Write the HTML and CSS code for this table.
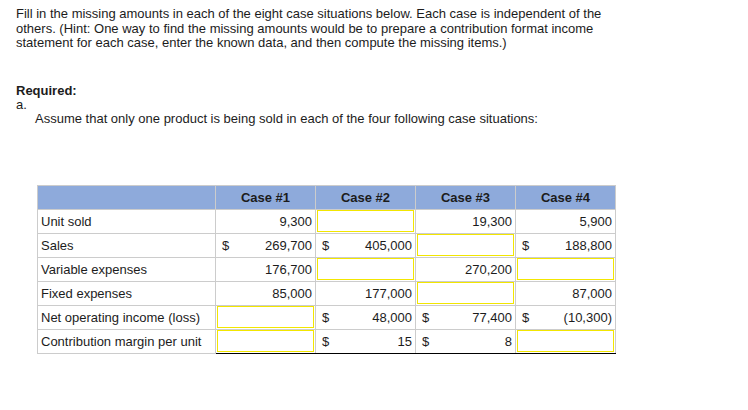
FILE: index.html
```html
<!DOCTYPE html>
<html>
<head>
<meta charset="utf-8">
<link rel="stylesheet" href="styles.css">
</head>
<body>
<div class="page">
  <p class="intro">Fill in the missing amounts in each of the eight case situations below. Each case is independent of the others. (Hint: One way to find the missing amounts would be to prepare a contribution format income statement for each case, enter the known data, and then compute the missing items.)</p>
  <div class="required">Required:</div>
  <div class="part">a.</div>
  <div class="part-text">Assume that only one product is being sold in each of the four following case situations:</div>

  <table class="cases">
    <thead>
      <tr>
        <th class="label-col"></th>
        <th>Case #1</th>
        <th>Case #2</th>
        <th>Case #3</th>
        <th>Case #4</th>
      </tr>
    </thead>
    <tbody>
      <tr class="r1">
        <td class="label">Unit sold</td>
        <td><div class="cell"><span></span><span>9,300</span></div></td>
        <td><div class="input"></div></td>
        <td><div class="cell"><span></span><span>19,300</span></div></td>
        <td><div class="cell"><span></span><span>5,900</span></div></td>
      </tr>
      <tr class="r2">
        <td class="label">Sales</td>
        <td><div class="cell"><span>$</span><span>269,700</span></div></td>
        <td><div class="cell"><span>$</span><span>405,000</span></div></td>
        <td><div class="input"></div></td>
        <td><div class="cell"><span>$</span><span>188,800</span></div></td>
      </tr>
      <tr class="r3">
        <td class="label">Variable expenses</td>
        <td><div class="cell"><span></span><span>176,700</span></div></td>
        <td><div class="input"></div></td>
        <td><div class="cell"><span></span><span>270,200</span></div></td>
        <td><div class="input"></div></td>
      </tr>
      <tr class="r4">
        <td class="label">Fixed expenses</td>
        <td><div class="cell"><span></span><span>85,000</span></div></td>
        <td><div class="cell"><span></span><span>177,000</span></div></td>
        <td><div class="input"></div></td>
        <td><div class="cell"><span></span><span>87,000</span></div></td>
      </tr>
      <tr class="r5">
        <td class="label">Net operating income (loss)</td>
        <td><div class="input"></div></td>
        <td><div class="cell"><span>$</span><span>48,000</span></div></td>
        <td><div class="cell"><span>$</span><span>77,400</span></div></td>
        <td><div class="cell"><span>$</span><span>(10,300)</span></div></td>
      </tr>
      <tr class="r6">
        <td class="label">Contribution margin per unit</td>
        <td><div class="input"></div></td>
        <td><div class="cell"><span>$</span><span>15</span></div></td>
        <td><div class="cell"><span>$</span><span>8</span></div></td>
        <td><div class="input"></div></td>
      </tr>
    </tbody>
  </table>
</div>
</body>
</html>
```

FILE: styles.css
```css
html, body {
  margin: 0;
  padding: 0;
  background: #ffffff;
}

body {
  font-family: "Liberation Sans", Arial, sans-serif;
  font-size: 13px;
  color: #1c1c1c;
}

.page {
  padding: 7px 8px 0 16px;
}

.intro {
  margin: 0;
  width: 600px;
  line-height: 14.5px;
}

.required {
  margin-top: 32px;
  font-weight: bold;
  line-height: 15px;
}

.part {
  line-height: 13px;
}

.part-text {
  padding-left: 19px;
  line-height: 15px;
}

.cases {
  margin-top: 59px;
  margin-left: 21px;
  border-collapse: collapse;
  table-layout: fixed;
  width: 579px;
}

.cases th,
.cases td {
  height: 23px;
  padding: 0;
  border: 1px solid #cccccc;
}

.cases th {
  background: #8eaadb;
  font-weight: bold;
  color: #1c1c1c;
  text-align: center;
  width: 99px;
}

.cases th.label-col {
  width: 177px;
}

.cases td.label {
  padding-left: 3px;
  text-align: left;
}

.r2 td:not(.label),
.r4 td:not(.label),
.r5 td:not(.label),
.r6 td:not(.label) {
  border-top-color: #000000;
}

.r6 td:not(.label) {
  border-bottom-color: #000000;
}

.cell {
  display: flex;
  justify-content: space-between;
  padding: 0 3px 0 6px;
}

.input {
  height: 22px;
  margin: 0 1px;
  border: 1px solid #f2e600;
  box-sizing: border-box;
}
```
